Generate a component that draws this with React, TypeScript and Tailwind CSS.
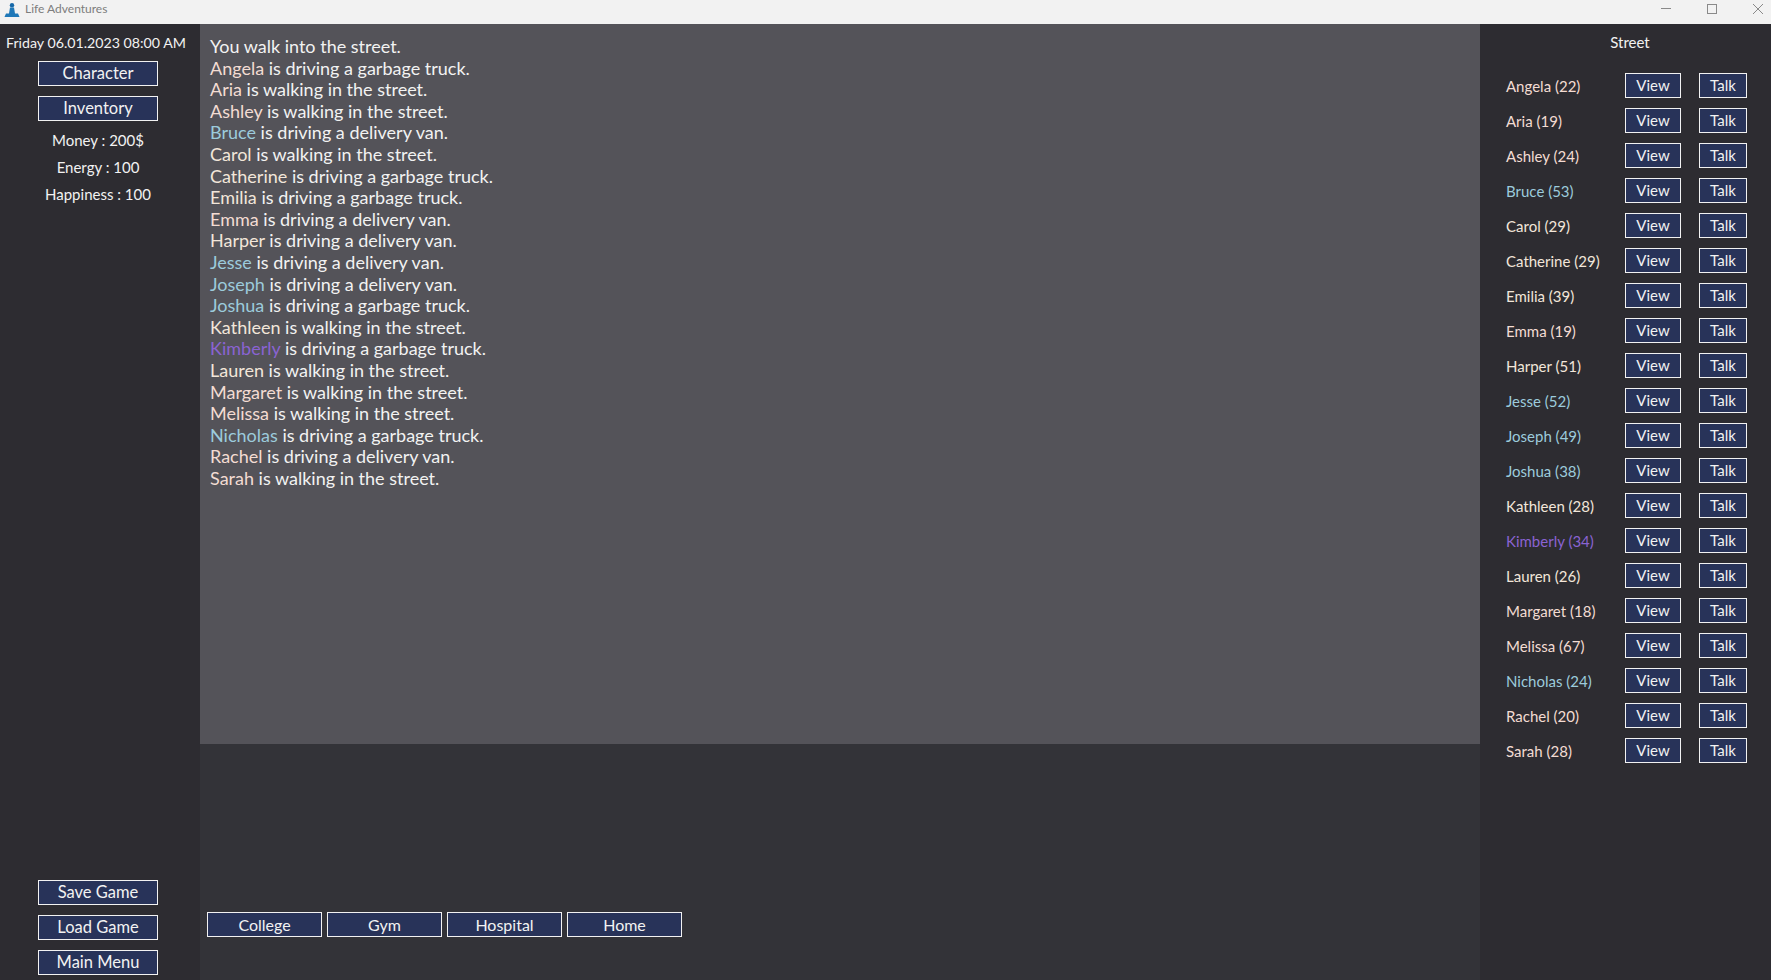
const FONT = "font-['Lato','Open_Sans',sans-serif]";

const pink = "text-[#f3dcd3]";
const cream = "text-[#f2e6da]";
const blue = "text-[#9ccbdc]";
const purple = "text-[#8a63d2]";

const people = [
  { name: "Angela", age: 22, color: pink, action: "is driving a garbage truck." },
  { name: "Aria", age: 19, color: pink, action: "is walking in the street." },
  { name: "Ashley", age: 24, color: pink, action: "is walking in the street." },
  { name: "Bruce", age: 53, color: blue, action: "is driving a delivery van." },
  { name: "Carol", age: 29, color: cream, action: "is walking in the street." },
  { name: "Catherine", age: 29, color: cream, action: "is driving a garbage truck." },
  { name: "Emilia", age: 39, color: cream, action: "is driving a garbage truck." },
  { name: "Emma", age: 19, color: pink, action: "is driving a delivery van." },
  { name: "Harper", age: 51, color: cream, action: "is driving a delivery van." },
  { name: "Jesse", age: 52, color: blue, action: "is driving a delivery van." },
  { name: "Joseph", age: 49, color: blue, action: "is driving a delivery van." },
  { name: "Joshua", age: 38, color: blue, action: "is driving a garbage truck." },
  { name: "Kathleen", age: 28, color: cream, action: "is walking in the street." },
  { name: "Kimberly", age: 34, color: purple, action: "is driving a garbage truck." },
  { name: "Lauren", age: 26, color: cream, action: "is walking in the street." },
  { name: "Margaret", age: 18, color: pink, action: "is walking in the street." },
  { name: "Melissa", age: 67, color: pink, action: "is walking in the street." },
  { name: "Nicholas", age: 24, color: blue, action: "is driving a garbage truck." },
  { name: "Rachel", age: 20, color: pink, action: "is driving a delivery van." },
  { name: "Sarah", age: 28, color: pink, action: "is walking in the street." },
];

function GameButton({ label, className }: { label: string; className: string }) {
  return (
    <button className={`h-[25px] shrink-0 border border-[#f2f2f2] bg-[#283359] text-[#f2f2f2] flex items-center justify-center leading-none ${className}`}>
      {label}
    </button>
  );
}

export default function App() {
  return (
    <div className={`${FONT} w-[1771px] h-[980px] flex flex-col overflow-hidden bg-[#2d2c31] text-[#f2f2f2]`}>
      {/* Title bar */}
      <div className="h-[24px] shrink-0 bg-[#f2f2f2] flex items-start text-[#7d7d7d]">
        <svg width="16" height="16" viewBox="0 0 16 16" className="ml-[4px] mt-[2px]">
          <circle cx="8" cy="3.2" r="2.2" fill="#1668a8" />
          <path d="M6 5.5h4l1 6h3l1.5 3.5H.5L2 11.5h3z" fill="#1f78b8" />
        </svg>
        <span className="ml-[5px] mt-[1px] text-[12px] leading-[16px]">Life Adventures</span>
        <div className="ml-auto flex items-start pt-[3px]">
          <svg width="12" height="12" viewBox="0 0 12 12" className="mr-[34px]">
            <path d="M1 5.5h10" stroke="#8a8a8a" fill="none" />
          </svg>
          <svg width="12" height="12" viewBox="0 0 12 12" className="mr-[34px]">
            <rect x="1.5" y="1.5" width="9" height="9" stroke="#8a8a8a" fill="none" />
          </svg>
          <svg width="12" height="12" viewBox="0 0 12 12" className="mr-[7px]">
            <path d="M1 1l10 10M11 1L1 11" stroke="#8a8a8a" fill="none" />
          </svg>
        </div>
      </div>

      <div className="flex-1 flex min-h-0">
        {/* Left sidebar */}
        <div className="w-[200px] shrink-0 flex flex-col items-center pr-[4px] text-[15px]">
          <div className="h-[37px] flex items-center pr-[4px] text-[14.2px]">Friday 06.01.2023 08:00 AM</div>
          <GameButton label="Character" className="w-[120px] text-[16.5px]" />
          <GameButton label="Inventory" className="w-[120px] mt-[10px] text-[16.5px]" />
          <div className="mt-[6px] h-[27px] flex items-center">Money : 200$</div>
          <div className="h-[27px] flex items-center">Energy : 100</div>
          <div className="h-[27px] flex items-center">Happiness : 100</div>
          <div className="mt-auto mb-[5px] flex flex-col gap-[10px]">
            <GameButton label="Save Game" className="w-[120px] text-[16.5px]" />
            <GameButton label="Load Game" className="w-[120px] text-[16.5px]" />
            <GameButton label="Main Menu" className="w-[120px] text-[16.5px]" />
          </div>
        </div>

        {/* Center */}
        <div className="flex-1 flex flex-col bg-[#333338] min-w-0">
          <div className="h-[720px] shrink-0 bg-[#545359] pl-[10px] pt-[12px] text-[18px] leading-[21.6px] text-[#f2f2f2]">
            <div>You walk into the street.</div>
            {people.map((p) => (
              <div key={p.name}>
                <span className={p.color}>{p.name}</span> {p.action}
              </div>
            ))}
          </div>
          <div className="flex-1 pl-[7px] pt-[168px] flex gap-[5px] text-[16px]">
            <GameButton label="College" className="w-[115px]" />
            <GameButton label="Gym" className="w-[115px]" />
            <GameButton label="Hospital" className="w-[115px]" />
            <GameButton label="Home" className="w-[115px]" />
          </div>
        </div>

        {/* Right panel */}
        <div className="w-[291px] shrink-0 flex flex-col text-[15px]">
          <div className="h-[37px] flex items-center justify-center pl-[9px]">Street</div>
          <div className="mt-[12px] flex flex-col gap-[10px]">
            {people.map((p) => (
              <div key={p.name} className="flex items-center pl-[26px]">
                <span className={`w-[119px] pt-[1px] ${p.color}`}>
                  {p.name} ({p.age})
                </span>
                <GameButton label="View" className="w-[56px]" />
                <GameButton label="Talk" className="w-[48px] ml-[18px]" />
              </div>
            ))}
          </div>
        </div>
      </div>
    </div>
  );
}
